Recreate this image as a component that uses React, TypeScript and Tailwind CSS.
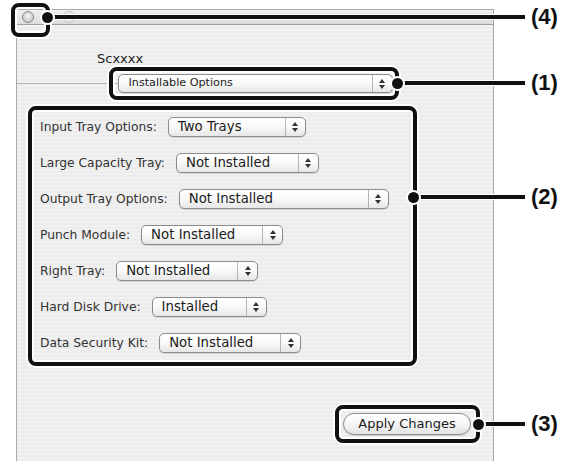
import React from "react";

function Arrows() {
  return (
    <div className="flex w-[20px] flex-col items-center justify-center gap-[2px] border-l border-[#b4b4b4]">
      <svg width="6" height="4" viewBox="0 0 6 4"><path d="M3 0 L6 4 L0 4 Z" fill="#333" /></svg>
      <svg width="6" height="4" viewBox="0 0 6 4"><path d="M0 0 L6 0 L3 4 Z" fill="#333" /></svg>
    </div>
  );
}

function Popup({ cls, value, small }: { cls: string; value: string; small?: boolean }) {
  return (
    <div
      className={
        "flex items-stretch rounded-[5px] border border-[#8c8c8c] bg-gradient-to-b from-white via-[#f9f9f9] to-[#e6e6e6] shadow-[0_1px_1px_rgba(0,0,0,0.12)] " +
        cls
      }
    >
      <div
        className={
          "flex flex-1 items-center text-[#1a1a1a] " +
          (small ? "pl-[10px] text-[11.2px]" : "pl-[9px] text-[13.3px]")
        }
      >
        {value}
      </div>
      <Arrows />
    </div>
  );
}

function Row({ label, value, cls }: { label: string; value: string; cls: string }) {
  return (
    <div className="flex h-[20px] items-center gap-[11px]">
      <span className="text-[12.3px] text-[#333]">{label}</span>
      <Popup cls={"h-[20px] " + cls} value={value} />
    </div>
  );
}

function Box({ cls }: { cls: string }) {
  return (
    <div
      className={
        "absolute rounded-[8px] border-[4px] border-[#111] shadow-[0_0_0_2px_#fff,inset_0_0_0_2px_#fff] " + cls
      }
    />
  );
}

function Dot({ cls }: { cls: string }) {
  return <div className={"absolute h-[11px] w-[11px] rounded-full bg-[#111] shadow-[0_0_0_2px_#fff] " + cls} />;
}

function Line({ cls }: { cls: string }) {
  return <div className={"absolute h-[4px] bg-[#111] shadow-[0_0_0_1px_#fff] " + cls} />;
}

function Label({ text, cls }: { text: string; cls: string }) {
  return (
    <div
      className={
        "absolute font-['Liberation_Sans',Arial,sans-serif] text-[22px] font-bold leading-[22px] text-[#111] " + cls
      }
    >
      {text}
    </div>
  );
}

export default function App() {
  const rows = [
    { label: "Input Tray Options:", value: "Two Trays", cls: "w-[138px]" },
    { label: "Large Capacity Tray:", value: "Not Installed", cls: "w-[143px]" },
    { label: "Output Tray Options:", value: "Not Installed", cls: "w-[210px]" },
    { label: "Punch Module:", value: "Not Installed", cls: "w-[142px]" },
    { label: "Right Tray:", value: "Not Installed", cls: "w-[142px]" },
    { label: "Hard Disk Drive:", value: "Installed", cls: "w-[115px]" },
    { label: "Data Security Kit:", value: "Not Installed", cls: "w-[142px]" },
  ];
  return (
    <div className="relative h-[461px] w-[576px] overflow-hidden bg-white font-['DejaVu_Sans',sans-serif]">
      <div className="ml-[16px] mt-[9px] flex h-[452px] w-[478px] flex-col border border-b-0 border-[#a9a9a9]">
        <div className="flex h-[15px] items-center gap-[29px] border-b border-[#a0a0a0] bg-gradient-to-b from-[#efefef] to-[#dcdcdc] pl-[5px]">
          <div className="h-[12px] w-[12px] rounded-full border border-[#8a8a8a] bg-[radial-gradient(circle_at_50%_40%,#f4f4f4,#b9b9b9)]" />
          <div className="h-[12px] w-[12px] rounded-full border border-[#c4c4c4] bg-[radial-gradient(circle_at_50%_40%,#f6f6f6,#d6d6d6)]" />
        </div>
        <div className="flex flex-1 flex-col bg-[repeating-linear-gradient(0deg,#ececec_0px,#ececec_2px,#f1f1f1_2px,#f1f1f1_4px)]">
          <div className="pl-[80px] pt-[26px] text-[13px] leading-[16px] text-[#222]">Scxxxx</div>
          <div className="mt-[7px] flex items-center">
            <div className="h-px flex-1 bg-[#b5b5b5]" />
            <Popup cls="h-[19px] w-[275px]" value="Installable Options" small />
            <div className="h-px flex-1 bg-[#b5b5b5]" />
          </div>
          <div className="mt-[24px] flex flex-col gap-[16px] pl-[23px]">
            {rows.map((r) => (
              <Row key={r.label} label={r.label} value={r.value} cls={r.cls} />
            ))}
          </div>
          <div className="mt-[60px] flex justify-end pr-[22px]">
            <div className="flex h-[22px] w-[128px] items-center justify-center rounded-full border border-[#8c8c8c] bg-gradient-to-b from-white via-[#f6f6f6] to-[#e2e2e2] text-[13px] text-[#1a1a1a] shadow-[0_1px_1px_rgba(0,0,0,0.12)]">
              Apply Changes
            </div>
          </div>
        </div>
      </div>

      {/* callout 4 */}
      <Box cls="left-[11px] top-[3px] h-[34px] w-[39px]" />
      <Line cls="left-[47px] top-[15px] w-[478px]" />
      <Dot cls="left-[42px] top-[12px]" />
      <Label text="(4)" cls="left-[531px] top-[6px]" />

      {/* callout 1 */}
      <Box cls="left-[109px] top-[67px] h-[33px] w-[290px]" />
      <Line cls="left-[398px] top-[81px] w-[127px]" />
      <Dot cls="left-[392px] top-[78px]" />
      <Label text="(1)" cls="left-[531px] top-[72px]" />

      {/* callout 2 */}
      <Box cls="left-[28px] top-[106px] h-[260px] w-[389px]" />
      <Line cls="left-[413px] top-[195px] w-[112px]" />
      <Dot cls="left-[408px] top-[192px]" />
      <Label text="(2)" cls="left-[531px] top-[186px]" />

      {/* callout 3 */}
      <Box cls="left-[335px] top-[405px] h-[38px] w-[145px]" />
      <Line cls="left-[478px] top-[422px] w-[47px]" />
      <Dot cls="left-[473px] top-[419px]" />
      <Label text="(3)" cls="left-[531px] top-[413px]" />
    </div>
  );
}
